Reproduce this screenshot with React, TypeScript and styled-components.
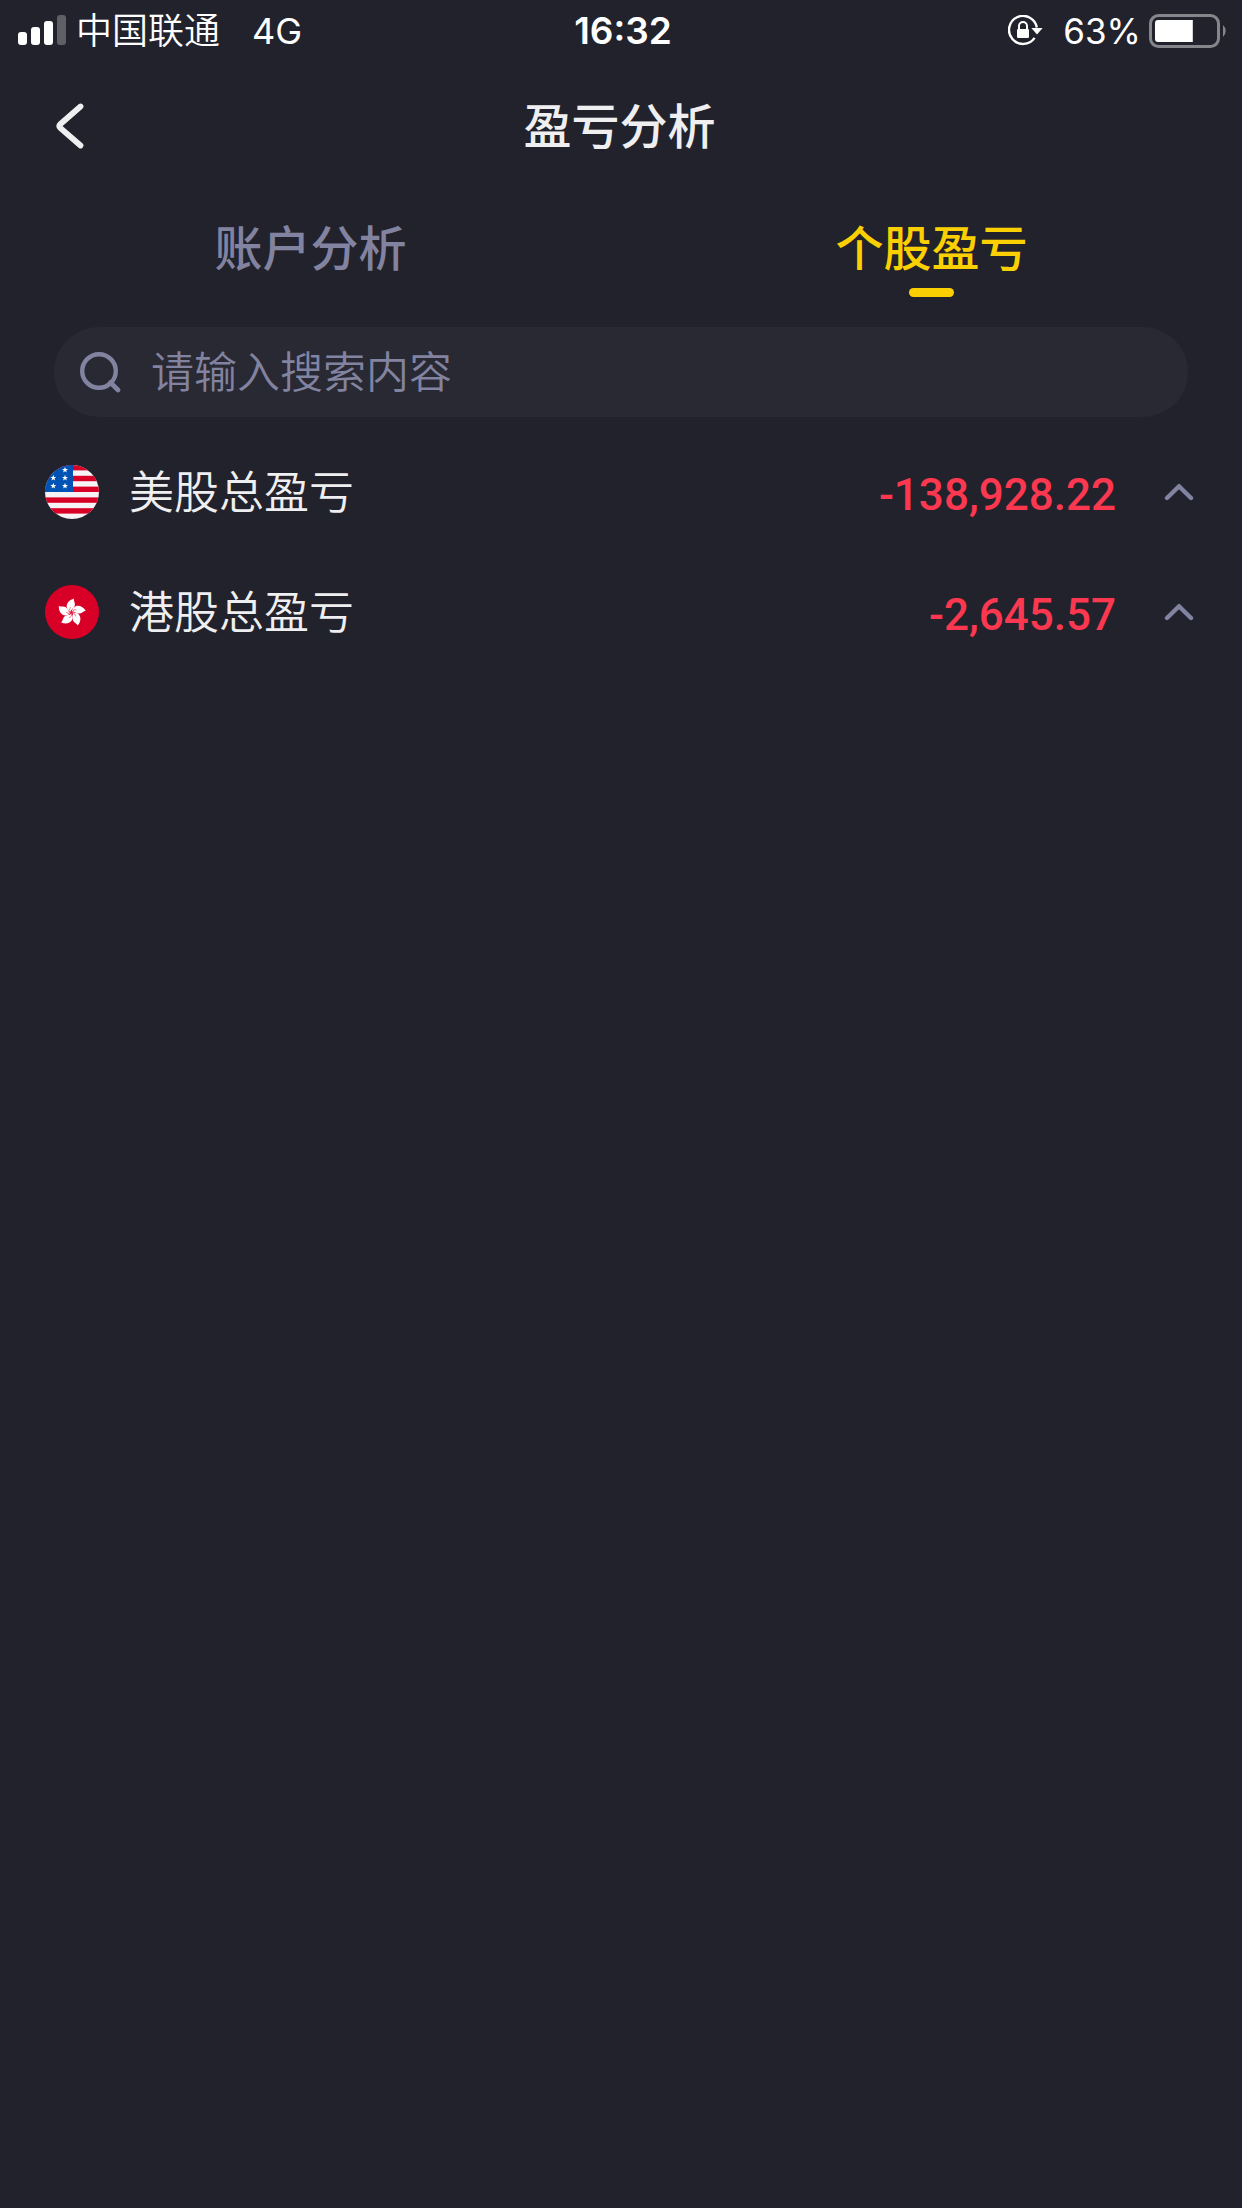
import React, { useState } from "react";
import styled, { createGlobalStyle } from "styled-components";

const color = {
  page: "#22222c",
  field: "#292933",
  text: "#efeff1",
  muted: "#8283a0",
  accent: "#fbd003",
  loss: "#fb384f",
};

const GlobalStyle = createGlobalStyle`
  *, *::before, *::after { box-sizing: border-box; }
  body {
    margin: 0;
    background: ${color.page};
    color: ${color.text};
    font-family: Inter, "Noto Sans CJK SC", sans-serif;
  }
  button, input { font: inherit; color: inherit; }
  button { border: 0; padding: 0; background: none; cursor: pointer; }
  svg { display: block; flex: none; }
`;

const Screen = styled.div`
  min-height: 100vh;
  background: ${color.page};
`;

const StatusBar = styled.div`
  display: grid;
  grid-template-columns: 1fr auto 1fr;
  align-items: center;
  height: 62px;
  padding: 0 14px 0 18px;
  color: #fff;
  font-size: 36px;
  line-height: 48px;
`;

const StatusGroup = styled.div<{ $end?: boolean }>`
  display: flex;
  align-items: center;
  justify-content: ${(p) => (p.$end ? "flex-end" : "flex-start")};
`;

const Carrier = styled.span`
  margin: 0 32px 0 10px;
  font-weight: 350;
`;

const Clock = styled.time`
  font-size: 37px;
  font-weight: 600;
`;

const Charge = styled.span`
  margin: 0 8px 0 19px;
  font-size: 35px;
`;

const Header = styled.header`
  display: grid;
  grid-template-columns: 60px 1fr 60px;
  align-items: center;
  height: 130px;
  padding: 0 42px 0 39px;
`;

const BackButton = styled.button`
  display: flex;
  align-items: center;
  height: 60px;
`;

const Title = styled.h1`
  margin: 0;
  font-size: 48px;
  line-height: 60px;
  font-weight: 500;
  text-align: center;
`;

const Tabs = styled.div`
  display: grid;
  grid-template-columns: 1fr 1fr;
  padding-top: 27px;
`;

const Tab = styled.button<{ $active: boolean }>`
  display: flex;
  flex-direction: column;
  align-items: center;
  gap: 9px;
  color: ${(p) => (p.$active ? color.accent : color.muted)};
  font-size: 48px;
  line-height: 60px;
  font-weight: 500;

  &::after {
    content: "";
    width: 45px;
    height: 9px;
    border-radius: 5px;
    background: ${(p) => (p.$active ? color.accent : "transparent")};
  }
`;

const SearchBox = styled.label`
  display: flex;
  align-items: center;
  gap: 30px;
  height: 90px;
  margin: 30px 54px 15px;
  padding: 0 26px;
  border-radius: 45px;
  background: ${color.field};
`;

const SearchInput = styled.input`
  flex: 1;
  min-width: 0;
  height: 60px;
  padding: 0;
  border: 0;
  outline: 0;
  background: none;
  font-size: 43px;
  font-weight: 350;

  &::placeholder {
    color: ${color.muted};
    opacity: 1;
  }
`;

const Markets = styled.ul`
  margin: 0;
  padding: 0;
  list-style: none;
`;

const MarketRow = styled.button`
  display: flex;
  align-items: center;
  width: 100%;
  height: 120px;
  padding: 0 48px 0 45px;
  text-align: left;
`;

const MarketName = styled.span`
  flex: 1;
  margin-left: 30px;
  padding-top: 2px;
  font-size: 45px;
  line-height: 60px;
  font-weight: 350;
`;

const Amount = styled.span`
  margin-right: 48px;
  padding-top: 5px;
  color: ${color.loss};
  font-family: Roboto, sans-serif;
  font-size: 44px;
  line-height: 60px;
  font-weight: 500;
`;

const SignalIcon = () => (
  <svg width="48" height="32" viewBox="0 0 48 32" fill="#fff" aria-hidden="true">
    <rect x="0" y="17" width="9" height="13" rx="3" />
    <rect x="13" y="12" width="9" height="18" rx="3" />
    <rect x="26" y="6" width="9" height="24" rx="3" />
    <rect x="39" y="0" width="9" height="30" rx="3" opacity="0.28" />
  </svg>
);

const RotationLockIcon = () => (
  <svg width="36" height="32" viewBox="0 0 36 32" fill="none" aria-hidden="true">
    <path d="M26.6 22.8 A14 14 0 1 1 28.8 12.5" stroke="#fff" strokeWidth="2.4" />
    <path d="M23.4 13 H34.6 L29 19.6 Z" fill="#fff" />
    <rect x="9" y="14" width="12" height="9" rx="1.2" fill="#fff" />
    <path d="M11 15 V11 a4 4 0 0 1 8 0 V15" stroke="#fff" strokeWidth="2" />
  </svg>
);

const BatteryIcon = ({ level }: { level: number }) => (
  <svg width="79" height="34" viewBox="0 0 79 34" aria-hidden="true">
    <rect x="1.5" y="1.5" width="68" height="31" rx="8" fill="none" stroke="#85858c" strokeWidth="3" />
    <path d={`M9 6 H${6 + 60 * level} V28 H9 a3 3 0 0 1 -3 -3 V9 a3 3 0 0 1 3 -3 Z`} fill="#fff" />
    <path d="M74 11 a8 8 0 0 1 0 12 Z" fill="#85858c" />
  </svg>
);

const BackIcon = () => (
  <svg width="60" height="60" viewBox="0 0 60 60" fill="none" aria-hidden="true">
    <path
      d="M41.5 9.5 L21.2 27.2 Q19.2 29 21.2 30.8 L41.5 48.5"
      stroke={color.text}
      strokeWidth="5.8"
      strokeLinecap="round"
      strokeLinejoin="round"
    />
  </svg>
);

const SearchIcon = () => (
  <svg width="41" height="41" viewBox="0 0 41 41" fill="none" aria-hidden="true">
    <circle cx="19" cy="19" r="16.8" stroke={color.muted} strokeWidth="4.4" />
    <path d="M30.5 30.5 L38 38" stroke={color.muted} strokeWidth="4.6" strokeLinecap="round" />
  </svg>
);

const ChevronUpIcon = () => (
  <svg width="30" height="20" viewBox="0 0 30 20" fill="none" aria-hidden="true">
    <path
      d="M3 16 L15 4.2 L27 16"
      stroke={color.muted}
      strokeWidth="4.4"
      strokeLinecap="round"
      strokeLinejoin="round"
    />
  </svg>
);

const STAR = "M0 -3.2 L0.8 -1 L3 -1 L1.2 0.4 L1.9 2.6 L0 1.3 L-1.9 2.6 L-1.2 0.4 L-3 -1 L-0.8 -1 Z";
const STAR_SPOTS = [
  [20, 5],
  [8.3, 12.9],
  [20, 12.9],
  [8.3, 21],
  [20, 21],
];

const UsFlag = () => (
  <svg width="54" height="54" viewBox="0 0 54 54" role="img" aria-label="US">
    <clipPath id="us-round">
      <circle cx="27" cy="27" r="27" />
    </clipPath>
    <g clipPath="url(#us-round)">
      <rect width="54" height="54" fill="#f5f3f5" />
      {[0, 1, 2, 3, 4].map((n) => (
        <rect key={n} y={n * 10.8} width="54" height="5.4" fill="#d80027" />
      ))}
      <rect width="28" height="27" fill="#0052b4" />
      {STAR_SPOTS.map(([x, y]) => (
        <path key={`${x}-${y}`} d={STAR} transform={`translate(${x} ${y})`} fill="#fff" />
      ))}
    </g>
  </svg>
);

const HkFlag = () => (
  <svg width="54" height="54" viewBox="0 0 54 54" role="img" aria-label="HK">
    <circle cx="27" cy="27" r="27" fill="#d80027" />
    {[0, 72, 144, 216, 288].map((angle) => (
      <g key={angle} transform={`translate(26.5 27.6) rotate(${angle})`}>
        <path d="M-0.6 -0.4 C-7 -3.6 -6.4 -11.6 2.6 -14.2 C1.6 -11.6 5.4 -8.4 2 -4.8 C0.6 -3.4 -0.8 -2.6 -0.6 -0.4 Z" fill="#fff" />
        <path d="M-0.6 -0.6 C-2.2 -2.4 -2 -4.2 -1 -5.4" fill="none" stroke="#d80027" strokeWidth="0.5" />
      </g>
    ))}
  </svg>
);

const TABS = ["账户分析", "个股盈亏"];

const MARKETS = [
  { name: "美股总盈亏", amount: "-138,928.22", Flag: UsFlag },
  { name: "港股总盈亏", amount: "-2,645.57", Flag: HkFlag },
];

export default function App() {
  const [active, setActive] = useState(1);

  return (
    <Screen lang="zh-CN">
      <GlobalStyle />
      <StatusBar>
        <StatusGroup>
          <SignalIcon />
          <Carrier>中国联通</Carrier>
          <span>4G</span>
        </StatusGroup>
        <Clock>16:32</Clock>
        <StatusGroup $end>
          <RotationLockIcon />
          <Charge>63%</Charge>
          <BatteryIcon level={0.63} />
        </StatusGroup>
      </StatusBar>

      <Header>
        <BackButton type="button" aria-label="返回">
          <BackIcon />
        </BackButton>
        <Title>盈亏分析</Title>
      </Header>

      <main>
        <Tabs role="tablist">
          {TABS.map((label, index) => (
            <Tab
              key={label}
              type="button"
              role="tab"
              aria-selected={index === active}
              $active={index === active}
              onClick={() => setActive(index)}
            >
              {label}
            </Tab>
          ))}
        </Tabs>

        <SearchBox>
          <SearchIcon />
          <SearchInput type="text" placeholder="请输入搜索内容" aria-label="请输入搜索内容" />
        </SearchBox>

        <Markets>
          {MARKETS.map(({ name, amount, Flag }) => (
            <li key={name}>
              <MarketRow type="button">
                <Flag />
                <MarketName>{name}</MarketName>
                <Amount>{amount}</Amount>
                <ChevronUpIcon />
              </MarketRow>
            </li>
          ))}
        </Markets>
      </main>
    </Screen>
  );
}
